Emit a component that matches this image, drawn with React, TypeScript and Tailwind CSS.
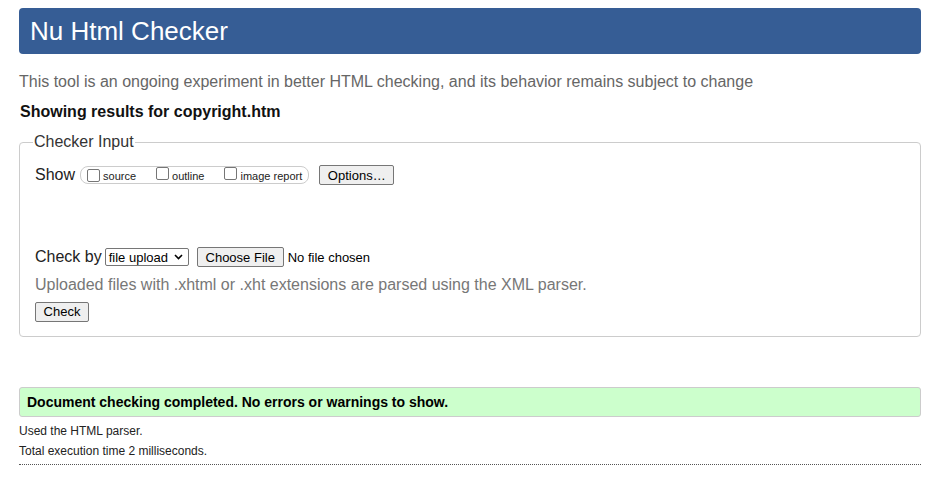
import React from "react";

function Box() {
  return <span className="inline-block w-[13px] h-[13px] border border-[#767676] rounded-[2px] bg-white shrink-0" />;
}

function Btn({ children, className = "" }: { children: React.ReactNode; className?: string }) {
  return (
    <span
      className={`inline-flex items-center justify-center h-[20px] border border-[#767676] rounded-[2px] bg-[#efefef] text-[13px] text-black leading-none ${className}`}
    >
      {children}
    </span>
  );
}

export default function App() {
  return (
    <div className="min-h-[496px] bg-white pl-[19px] pr-[16px] pt-[8px] font-['Liberation_Sans',Arial,sans-serif] text-[#222]">
      <div className="h-[46px] rounded-[4px] bg-[#365d95] flex items-center pl-[11px] pb-[1px]">
        <h1 className="text-[26px] text-white leading-none">Nu Html Checker</h1>
      </div>

      <p className="mt-[19px] h-[18px] leading-[18px] text-[16px] text-[#666]">
        This tool is an ongoing experiment in better HTML checking, and its behavior remains subject to change
      </p>

      <p className="mt-[12px] pl-[1px] h-[18px] leading-[18px] text-[16px] font-bold text-[#111]">
        Showing results for copyright.htm
      </p>

      <fieldset className="mt-[12px] border border-[#ccc] rounded-[4px] pl-[15px] pr-[15px] h-[204px]">
        <legend className="ml-[-2px] px-[1px] text-[16px] text-[#333] leading-[18px]">Checker Input</legend>

        <div className="mt-[14px] flex items-center h-[20px]">
          <span className="text-[16px] text-[#222] leading-none">Show</span>
          <span className="ml-[5px] flex items-center h-[18px] border border-[#ccc] rounded-[8px] pl-[6px] pr-[6px]">
            <Box />
            <span className="ml-[3px] mt-[3px] text-[11px] text-[#222] leading-none">source</span>
            <span className="ml-[20px]"><Box /></span>
            <span className="ml-[3px] mt-[3px] text-[11px] text-[#222] leading-none">outline</span>
            <span className="ml-[20px]"><Box /></span>
            <span className="ml-[3px] mt-[3px] text-[11px] text-[#222] leading-none">image report</span>
          </span>
          <Btn className="ml-[10px] w-[75px]">Options…</Btn>
        </div>

        <div className="mt-[62px] flex items-center h-[20px]">
          <span className="text-[16px] text-[#222] leading-none">Check by</span>
          <span className="ml-[3px] flex items-center h-[18px] w-[84px] border border-[#767676] rounded-[2px] bg-white pl-[3px]">
            <span className="text-[13px] text-black leading-none">file upload</span>
            <svg className="ml-[6px]" width="9" height="6" viewBox="0 0 9 6">
              <path d="M1 1 L4.5 4.5 L8 1" fill="none" stroke="#000" strokeWidth="1.6" />
            </svg>
          </span>
          <Btn className="ml-[8px] w-[87px]">Choose File</Btn>
          <span className="ml-[4px] text-[13px] text-black leading-none">No file chosen</span>
        </div>

        <p className="mt-[9px] h-[18px] leading-[18px] text-[16px] text-[#777]">
          Uploaded files with .xhtml or .xht extensions are parsed using the XML parser.
        </p>

        <div className="mt-[5px]">
          <Btn className="w-[54px]">Check</Btn>
        </div>
      </fieldset>

      <div className="mt-[50px] h-[30px] border border-[#ccc] rounded-[3px] bg-[#ccffcc] flex items-center pl-[7px]">
        <span className="text-[14px] font-bold text-black leading-none">
          Document checking completed. No errors or warnings to show.
        </span>
      </div>

      <p className="mt-[6px] h-[16px] leading-[16px] text-[12px] text-[#222]">Used the HTML parser.</p>
      <p className="mt-[4px] h-[16px] leading-[16px] text-[12px] text-[#222]">Total execution time 2 milliseconds.</p>
      <div className="mt-[5px] border-t border-dotted border-[#555]" />
    </div>
  );
}
